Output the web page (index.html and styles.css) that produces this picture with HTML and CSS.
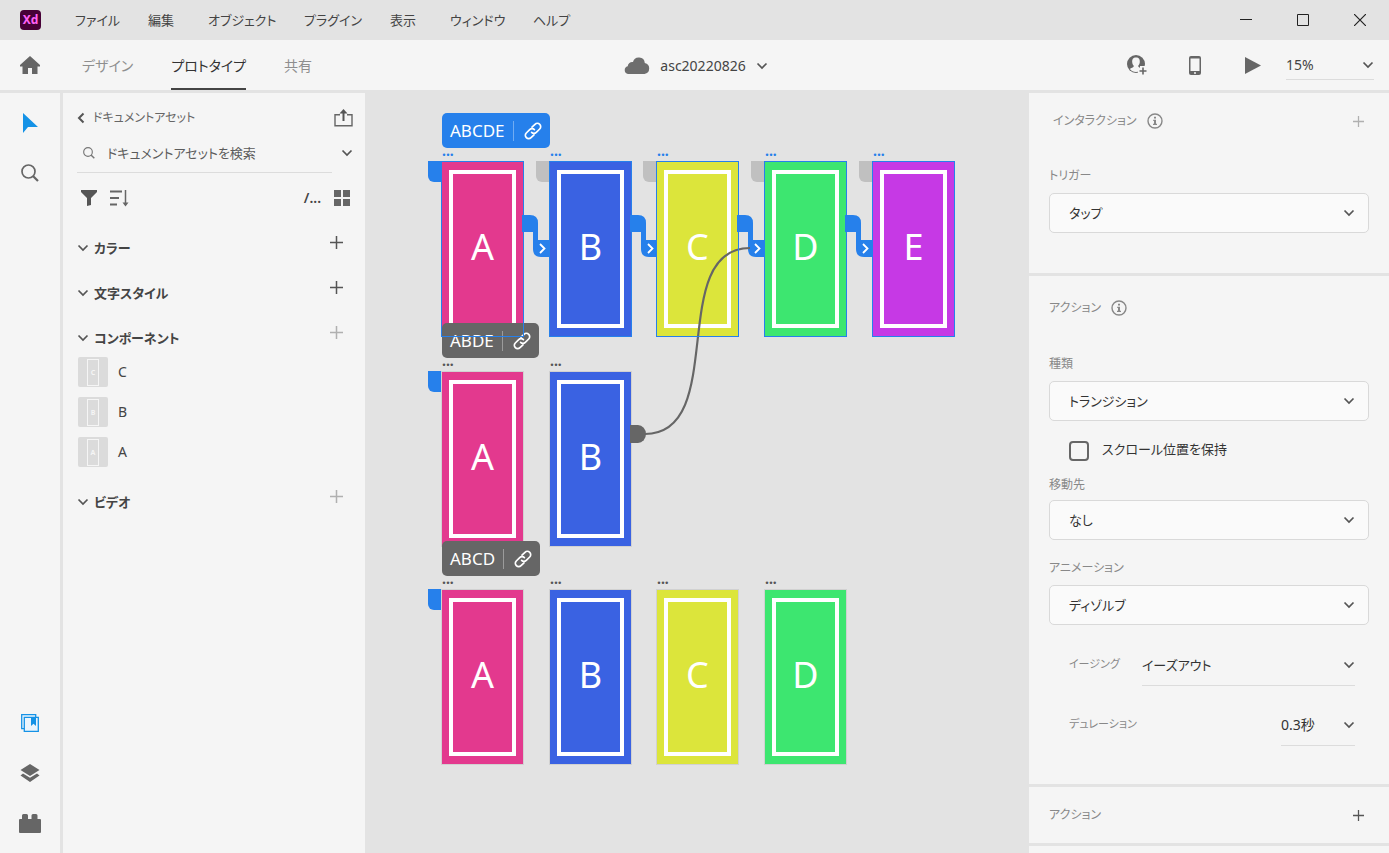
FILE: index.html
```html
<!DOCTYPE html>
<html lang="ja">
<head>
<meta charset="utf-8">
<title>asc20220826</title>
<link rel="stylesheet" href="styles.css">
</head>
<body>
<svg class="defs" aria-hidden="true">
  <symbol id="chev" viewBox="0 0 12 8"><path d="M1.5 1.5 6 6l4.500-4.500" fill="none" stroke="currentColor" stroke-width="1.700"/></symbol>
  <symbol id="plus" viewBox="0 0 13 13"><path d="M6.500 0v13M0 6.500h13" fill="none" stroke="currentColor" stroke-width="1.500"/></symbol>
  <symbol id="info" viewBox="0 0 16 16"><circle cx="8" cy="8" r="7" fill="none" stroke="currentColor" stroke-width="1.400"/><path d="M7 3.800h2v1.800H7zM6.200 6.800H9v4h1v1.200H6v-1.200h1V8h-.8z" fill="currentColor"/></symbol>
  <symbol id="mag" viewBox="0 0 18 18"><circle cx="7.500" cy="7.500" r="6.500" fill="none" stroke="currentColor" stroke-width="1.700"/><path d="m12 12 5 5" stroke="currentColor" stroke-width="2.200"/></symbol>
  <symbol id="link" viewBox="0 0 18 18"><g fill="none" stroke="currentColor" stroke-width="1.700" stroke-linecap="round"><path d="M8 5.200 11 2.300a3.300 3.300 0 0 1 4.700 4.700L12.300 10.300a3.300 3.300 0 0 1-4.700 0"/><path d="M10 12.800 7 15.700A3.300 3.300 0 0 1 2.300 11L5.700 7.700a3.300 3.300 0 0 1 4.700 0"/></g></symbol>
  <symbol id="wire" viewBox="0 0 27 43"><path d="M0 1h8q8 0 8 8v17h11v17h-8q-8 0-8-8V18H0z" fill="#2680eb"/><path d="m18 30 4.500 4.500L18 39" fill="none" stroke="#fff" stroke-width="1.800"/></symbol>
</svg>

<header class="titlebar">
  <svg class="logo" width="21" height="20" viewBox="0 0 21 20"><rect width="21" height="20" rx="4" fill="#470137"/><text x="10.500" y="14" text-anchor="middle" fill="#ff61f6">Xd</text></svg>
  <nav class="menu">
    <button>ファイル</button><button>編集</button><button>オブジェクト</button><button>プラグイン</button><button>表示</button><button>ウィンドウ</button><button>ヘルプ</button>
  </nav>
  <div class="window-controls">
    <button aria-label="最小化"><svg width="12" height="12"><path d="M0 5.500h12" stroke="#222"/></svg></button>
    <button aria-label="最大化"><svg width="12" height="12"><path d="M.5.5h11v11H.5z" fill="none" stroke="#222"/></svg></button>
    <button aria-label="閉じる"><svg width="12" height="12"><path d="m0 0 12 12M12 0 0 12" stroke="#222" stroke-width="1.200"/></svg></button>
  </div>
</header>

<div class="toolbar">
  <div class="tabs">
    <button class="home" aria-label="ホーム"><svg width="20" height="18" viewBox="0 0 20 18"><path d="M10 0 20 9v1.500h-2.500V18H12v-6H8v6H2.500v-7.500H0V9z" fill="currentColor"/></svg></button>
    <button class="tab">デザイン</button>
    <button class="tab active">プロトタイプ</button>
    <button class="tab">共有</button>
  </div>
  <button class="document">
    <svg width="26" height="17" viewBox="0 0 26 17"><path d="M4 17a4 4 0 0 1-.3-7.800A4.500 4.500 0 0 1 9 5a6 6 0 0 1 11.800 1A5.600 5.600 0 0 1 20.500 17z" fill="#6e6e6e"/></svg>
    <span>asc20220826</span>
    <svg class="chev" width="12" height="8"><use href="#chev"/></svg>
  </button>
  <div class="tools">
    <button aria-label="招待"><svg width="22" height="22" viewBox="0 0 22 22"><circle cx="10" cy="10" r="9" fill="#666"/><path d="M10 3.500c3 0 4 2 3.800 4.700-.2 1.900-1 3-1.700 3.700.2 1.500 3 1.800 4 3.200Q14 18 10 18t-6.100-2.900c1-1.400 3.800-1.700 4-3.200-.8-.8-1.500-1.800-1.700-3.700C6 5.500 7 3.500 10 3.500z" fill="#f5f5f5"/><path d="M16.500 12v9M12 16.500h9" stroke="#f5f5f5" stroke-width="5"/><path d="M17 13.500v7M13.500 17h7" stroke="#666" stroke-width="1.600"/></svg></button>
    <button aria-label="デバイスプレビュー"><svg width="12" height="19" viewBox="0 0 12 19"><rect width="12" height="19" rx="2" fill="#666"/><path d="M1.500 2.500h9v12.500h-9z" fill="#f5f5f5"/><circle cx="6" cy="17" r="1" fill="#f5f5f5"/></svg></button>
    <button aria-label="プレビュー"><svg width="16" height="17"><path d="M0 0 16 8.500 0 17z" fill="#666"/></svg></button>
    <label class="pick zoom"><select aria-label="ズーム"><option>15%</option></select><svg class="chev" width="12" height="8"><use href="#chev"/></svg></label>
  </div>
</div>

<main class="workspace">
  <nav class="rail">
    <button class="on" aria-label="選択"><svg width="16" height="20"><path d="M1 0v20l5-6h10z" fill="currentColor"/></svg></button>
    <button aria-label="ズーム"><svg width="18" height="18"><use href="#mag"/></svg></button>
    <span class="spring"></span>
    <button class="on" aria-label="アセット"><svg width="18" height="18" viewBox="0 0 18 18"><g fill="#eaf4fd" stroke="currentColor" stroke-width="1.300"><path d="M.7.700h14v14h-14z"/><path d="M3.300 3.300h14v14h-14z"/></g><path d="M10 3h5v9l-2.500-2.300L10 12z" fill="currentColor"/></svg></button>
    <button aria-label="レイヤー"><svg width="20" height="18" viewBox="0 0 20 18"><path d="m10 0 9.500 6-9.500 6L.5 6zM.5 11.500l2.500-2 7 4.300 7-4.300 2.500 2L10 18z" fill="currentColor"/></svg></button>
    <button aria-label="プラグイン"><svg width="22" height="19" viewBox="0 0 22 19"><path d="M1 5h2V1.500Q3 0 4.500 0h3Q9 0 9 1.500V5h3.500V1.500q0-1.500 1.500-1.500h3q1.500 0 1.500 1.500V5H21q1 0 1 1v12q0 1-1 1H1q-1 0-1-1V6q0-1 1-1z" fill="currentColor"/></svg></button>
  </nav>

  <aside class="assets">
    <div class="assets-head">
      <button class="back"><svg width="8" height="12"><path d="M6.500 1.500 2 6l4.500 4.500" fill="none" stroke="#555" stroke-width="2"/></svg>ドキュメントアセット</button>
      <button aria-label="公開"><svg width="19" height="18" viewBox="0 0 19 18"><path d="M6 5.700H1v11h17v-11h-5" fill="none" stroke="#666" stroke-width="1.400"/><path d="M9.500 12V3" stroke="#555" stroke-width="2"/><path d="M5.500 4.500 9.500 0l4 4.500z" fill="#555"/></svg></button>
    </div>
    <div class="search">
      <label><svg width="12" height="12"><use href="#mag"/></svg><input type="text" aria-label="検索" placeholder="ドキュメントアセットを検索"></label>
      <button aria-label="検索対象"><svg class="chev" width="12" height="8"><use href="#chev"/></svg></button>
    </div>
    <div class="filters">
      <button aria-label="フィルター"><svg width="16" height="16"><path d="M0 0h16v2l-6 6v7l-4 1V8L0 2z" fill="#555"/></svg></button>
      <button aria-label="並べ替え"><svg width="19" height="17" viewBox="0 0 19 17"><path d="M0 1.500h12M0 8h9M0 14.500h7" stroke="#666" stroke-width="2"/><path d="M15.500 0v15" stroke="#666" stroke-width="1.500"/><path d="M12.500 12.500h6l-3 4z" fill="#666"/></svg></button>
      <span class="spring"></span>
      <button class="path">/...</button>
      <button aria-label="グリッド表示"><svg width="16" height="16"><path d="M0 0h7v7H0zM9 0h7v7H9zM0 9h7v7H0zM9 9h7v7H9z" fill="#666"/></svg></button>
    </div>
    <section class="group"><h2><svg class="chev" width="12" height="8"><use href="#chev"/></svg>カラー</h2><button aria-label="カラーを追加"><svg width="13" height="13"><use href="#plus"/></svg></button></section>
    <section class="group"><h2><svg class="chev" width="12" height="8"><use href="#chev"/></svg>文字スタイル</h2><button aria-label="文字スタイルを追加"><svg width="13" height="13"><use href="#plus"/></svg></button></section>
    <section class="group"><h2><svg class="chev" width="12" height="8"><use href="#chev"/></svg>コンポーネント</h2><button class="off" aria-label="コンポーネントを追加"><svg width="13" height="13"><use href="#plus"/></svg></button></section>
    <ul class="components">
      <li><span class="thumb"><b>C</b></span>C</li>
      <li><span class="thumb"><b>B</b></span>B</li>
      <li><span class="thumb"><b>A</b></span>A</li>
    </ul>
    <section class="group"><h2><svg class="chev" width="12" height="8"><use href="#chev"/></svg>ビデオ</h2><button class="off" aria-label="ビデオを追加"><svg width="13" height="13"><use href="#plus"/></svg></button></section>
  </aside>

  <div class="canvas">
    <div class="flow r1">
      <div class="board a c1"><span>A</span></div><div class="board b c2"><span>B</span></div><div class="board c c3"><span>C</span></div><div class="board d c4"><span>D</span></div><div class="board e c5"><span>E</span></div>
      <i class="flag c1"></i><i class="flag idle c2"></i><i class="flag idle c3"></i><i class="flag idle c4"></i><i class="flag idle c5"></i>
      <em class="name c1">...</em><em class="name c2">...</em><em class="name c3">...</em><em class="name c4">...</em><em class="name c5">...</em>
      <svg class="wire c1"><use href="#wire"/></svg><svg class="wire c2"><use href="#wire"/></svg><svg class="wire c3"><use href="#wire"/></svg><svg class="wire c4"><use href="#wire"/></svg>
      <div class="tag"><span>ABCDE</span><button aria-label="ABCDEのリンク"><svg width="18" height="18"><use href="#link"/></svg></button></div>
      <i class="sel c1"></i><i class="sel c2"></i><i class="sel c3"></i><i class="sel c4"></i><i class="sel c5"></i>
    </div>
    <div class="flow r2">
      <div class="board a c1"><span>A</span></div><div class="board b c2"><span>B</span></div>
      <i class="flag c1"></i>
      <em class="name c1">...</em><em class="name c2">...</em>
      <div class="tag"><span>ABDE</span><button aria-label="ABDEのリンク"><svg width="18" height="18"><use href="#link"/></svg></button></div>
    </div>
    <div class="flow r3">
      <div class="board a c1"><span>A</span></div><div class="board b c2"><span>B</span></div><div class="board c c3"><span>C</span></div><div class="board d c4"><span>D</span></div>
      <i class="flag c1"></i>
      <em class="name c1">...</em><em class="name c2">...</em><em class="name c3">...</em><em class="name c4">...</em>
      <div class="tag"><span>ABCD</span><button aria-label="ABCDのリンク"><svg width="18" height="18"><use href="#link"/></svg></button></div>
    </div>
    <svg class="curve" width="122" height="200" viewBox="0 0 122 200"><path d="M0 179h8a8 9 0 0 1 0 18H0z" fill="#666"/><path d="M15 188C99 188 36 2 120 2" fill="none" stroke="#666" stroke-width="2.200"/></svg>
  </div>

  <aside class="props">
    <section class="interaction">
      <div class="head indent"><h2>インタラクション</h2><svg class="info" width="16" height="16"><use href="#info"/></svg><button class="off" aria-label="インタラクションを追加"><svg width="11" height="11"><use href="#plus"/></svg></button></div>
      <label class="caption" for="trigger">トリガー</label>
      <div class="pick box"><select id="trigger"><option>タップ</option></select><svg class="chev" width="12" height="8"><use href="#chev"/></svg></div>
    </section>
    <section class="action">
      <div class="head"><h2>アクション</h2><svg class="info" width="16" height="16"><use href="#info"/></svg></div>
      <label class="caption first" for="kind">種類</label>
      <div class="pick box"><select id="kind"><option>トランジション</option></select><svg class="chev" width="12" height="8"><use href="#chev"/></svg></div>
      <label class="check"><input type="checkbox"><span>スクロール位置を保持</span></label>
      <label class="caption" for="dest">移動先</label>
      <div class="pick box"><select id="dest"><option>なし</option></select><svg class="chev" width="12" height="8"><use href="#chev"/></svg></div>
      <label class="caption spaced" for="anim">アニメーション</label>
      <div class="pick box"><select id="anim"><option>ディゾルブ</option></select><svg class="chev" width="12" height="8"><use href="#chev"/></svg></div>
      <div class="rows">
        <div class="row"><label for="ease">イージング</label><div class="pick line ease"><select id="ease"><option>イーズアウト</option></select><svg class="chev" width="12" height="8"><use href="#chev"/></svg></div></div>
        <div class="row"><label for="dur">デュレーション</label><div class="pick line dur"><select id="dur"><option>0.3秒</option></select><svg class="chev" width="12" height="8"><use href="#chev"/></svg></div></div>
      </div>
    </section>
    <section class="more">
      <div class="head"><h2>アクション</h2><button aria-label="アクションを追加"><svg width="11" height="11"><use href="#plus"/></svg></button></div>
    </section>
    <section class="rest"></section>
  </aside>
</main>
</body>
</html>
```
FILE: styles.css
```css
* { box-sizing: border-box; }
body {
  margin: 0;
  height: 100vh;
  display: flex;
  flex-direction: column;
  background: #e3e3e3;
  color: #444;
  font: 14px/20px "Noto Sans", "Noto Sans CJK JP", sans-serif;
  font-feature-settings: "palt";
  overflow: hidden;
}
button, select, input {
  font: inherit;
  font-feature-settings: "palt";
  color: inherit;
  background: none;
  border: 0;
  padding: 0;
  margin: 0;
}
button { display: flex; align-items: center; white-space: nowrap; }
h2 { margin: 0; font: inherit; }
svg { display: block; flex: none; }
.defs { position: absolute; width: 0; height: 0; }
.chev { color: #555; }
.spring { flex: 1; }

.titlebar { height: 40px; flex: none; display: flex; align-items: center; padding-left: 20px; }
.logo text { font: bold 12px "Noto Sans", sans-serif; }
.menu { display: grid; grid-template-columns: 73px 60px 96px 86px 60px 83px 60px; margin-left: 34px; font-size: 13px; }
.window-controls { margin-left: auto; display: flex; align-self: stretch; padding-right: 1px; }
.window-controls button { width: 57px; justify-content: center; }

.toolbar {
  height: 50px;
  flex: none;
  display: grid;
  grid-template-columns: 1fr auto 1fr;
  background: #f5f5f5;
  margin-bottom: 3px;
}
.tabs { display: flex; gap: 38px; padding-left: 20px; }
.home { color: #666; margin-right: 4px; }
.tab { color: #8e8e8e; border-bottom: 2px solid transparent; border-top: 3px solid transparent; }
.tab.active { color: #333; border-bottom-color: #444; }
.document { gap: 10px; padding: 1px 0 0 3px; }
.tools { display: flex; align-items: center; justify-content: flex-end; padding-right: 15px; }
.tools button { width: 58px; justify-content: center; }

.pick { display: grid; align-items: center; }
.pick select { grid-area: 1 / 1; width: 100%; appearance: none; outline: 0; }
.pick .chev { grid-area: 1 / 1; justify-self: end; pointer-events: none; }
.zoom { width: 88px; height: 30px; border-bottom: 1px solid #dcdcdc; margin-left: 4px; }

.workspace { flex: 1; min-height: 0; display: flex; gap: 3px; }
.rail { width: 60px; flex: none; display: flex; flex-direction: column; padding: 5px 0; background: #f5f5f5; color: #666; }
.rail button { height: 50px; justify-content: center; }
.rail .on { color: #1592e6; }

.assets { width: 302px; flex: none; background: #f5f5f5; padding: 10px 12px 10px 14px; }
.assets-head { display: flex; justify-content: space-between; height: 30px; align-items: center; font-size: 12px; }
.back { gap: 8px; color: #666; }
.search { display: flex; align-items: center; justify-content: space-between; height: 40px; font-size: 13px; }
.search label { display: flex; align-items: center; gap: 12px; width: 255px; height: 40px; padding-left: 6px; border-bottom: 1px solid #dcdcdc; color: #777; }
.search input { flex: 1; min-width: 0; outline: 0; }
.search input::placeholder { color: #5c5c5c; opacity: 1; }
.filters { display: flex; align-items: center; height: 50px; padding: 0 3px 0 4px; gap: 13px; }
.path { font-weight: 600; }
.group { display: flex; justify-content: space-between; height: 45px; padding-right: 10px; }
.group h2 { display: flex; align-items: center; gap: 5px; font-weight: 700; font-size: 13px; height: 45px; padding-top: 4px; }
.group button { height: 38px; color: #555; }
.group .off { color: #b0b0b0; }
.components { list-style: none; margin: -6px 0 0; padding: 0 0 5px 1px; }
.components li { display: flex; align-items: center; gap: 10px; height: 40px; }
.thumb { width: 30px; height: 30px; border-radius: 2px; background: #dbdbdb; display: flex; justify-content: center; align-items: center; }
.thumb b { width: 12px; height: 27px; border: 1px solid #f5f5f5; color: #f5f5f5; font-size: 7px; line-height: 25px; text-align: center; }

.canvas { flex: 1; min-width: 0; position: relative; margin-left: -3px; }
.flow { position: absolute; left: 77px; }
.r1 { top: 69px; }
.r2 { top: 279px; z-index: 1; }
.r3 { top: 497px; z-index: 1; }
.flow > * { position: absolute; }
.c1 { left: 0; }
.c2 { left: 108px; }
.c3 { left: 215px; }
.c4 { left: 323px; }
.c5 { left: 431px; }
.board { top: 0; width: 81px; height: 174px; padding: 8px 7px; display: flex; outline: 1px solid rgba(0, 0, 0, .08); }
.board span { flex: 1; border: 4px solid #fff; color: #fff; font-size: 36px; line-height: 146px; text-align: center; }
.a { background: #e3398e; }
.b { background: #3a62e2; }
.c { background: #dce53b; }
.d { background: #3de670; }
.e { background: #c639e5; }
.sel { top: -1px; width: 83px; height: 176px; margin-left: -1px; border: 1px solid #2680eb; z-index: 3; }
.flag { top: -1px; width: 13px; height: 21px; margin-left: -14px; border-radius: 0 0 0 6px; background: #2680eb; }
.flag.idle { background: #c0c0c0; }
.name { top: -21px; font: bold 14px/20px "Noto Sans", sans-serif; color: #555; }
.r1 .name { color: #2680eb; }
.wire { top: 52px; width: 27px; height: 43px; margin-left: 80px; z-index: 2; }
.tag { top: -49px; left: 0; height: 35px; display: flex; align-items: center; border-radius: 5px; background: #666; color: #fff; font-size: 17px; z-index: 1; }
.r1 .tag { background: #2680eb; }
.tag span { padding: 0 8px; }
.tag button { border-left: 1px solid rgba(255, 255, 255, .35); height: 20px; padding: 0 8px 0 10px; }
.curve { position: absolute; left: 265px; top: 153px; z-index: 2; }

.props { width: 360px; flex: none; display: flex; flex-direction: column; gap: 3px; margin-left: -3px; color: #333; }
.props section { background: #f5f5f5; padding: 0 20px; flex: none; }
.interaction { height: 180px; }
.props .action { padding-bottom: 29px; }
.more { height: 56px; }
.props .rest { flex: 1; }
.head { display: flex; align-items: center; height: 56px; gap: 10px; color: #888; font-size: 12px; }
.action .head { height: 64px; }
.head.indent { padding-left: 4px; }
.head button { margin-left: auto; margin-right: 5px; color: #555; }
.head .off { color: #b0b0b0; }
.caption { display: block; height: 44px; padding-top: 17px; font-size: 12px; color: #888; }
.caption.first { padding-top: 14px; height: 41px; }
.check + .caption { padding-top: 6px; height: 31px; }
.caption.spaced { padding-top: 18px; height: 45px; }
.box { height: 40px; font-size: 13px; }
.box select { height: 40px; padding-left: 19px; border: 1px solid #d9d9d9; border-radius: 5px; background: #fafafa; }
.box .chev { margin-right: 14px; }
.check { display: flex; align-items: flex-start; gap: 13px; height: 48px; padding: 18px 0 0 20px; font-size: 13px; }
.check input { appearance: none; width: 20px; height: 20px; margin-top: 2px; border: 2px solid #666; border-radius: 4px; }
.rows { padding-top: 10px; }
.row { display: flex; justify-content: space-between; align-items: center; height: 60px; padding: 0 14px 0 20px; }
.row label { font-size: 11px; color: #888; padding-bottom: 2px; }
.line { height: 41px; border-bottom: 1px solid #dcdcdc; }
.line select { height: 38px; }
.ease { width: 213px; font-size: 13px; }
.dur { width: 74px; }
```
